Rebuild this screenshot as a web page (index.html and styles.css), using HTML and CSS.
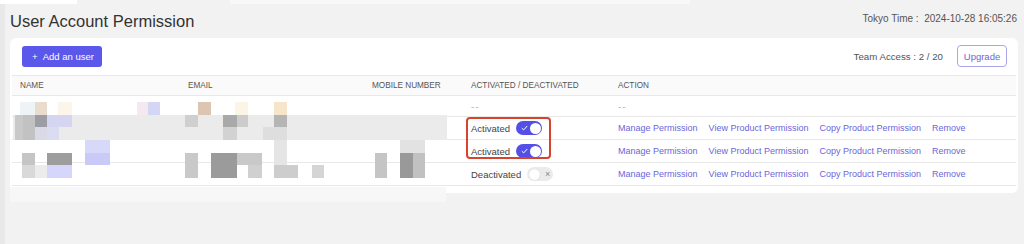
FILE: index.html
```html
<!DOCTYPE html>
<html lang="en">
<head>
    <meta charset="UTF-8">
    <meta name="viewport" content="width=device-width, initial-scale=1.0">
    <title>User Account Permission</title>
    <link rel="stylesheet" href="styles.css">
</head>
<body>
    <div class="page">
        <div class="top-strip">
            <span class="strip-a"></span>
            <span class="strip-b"></span>
        </div>

        <header class="page-head">
            <h1>User Account Permission</h1>
            <div class="clock">Tokyo Time :&nbsp; 2024-10-28 16:05:26</div>
        </header>

        <section class="card">
            <div class="toolbar">
                <button type="button" class="add-btn"><span class="plus">+</span> Add an user</button>
                <div class="team">
                    <span>Team Access : 2 / 20</span>
                    <button type="button" class="upgrade-btn">Upgrade</button>
                </div>
            </div>

            <div class="table">
                <div class="tr th">
                    <div class="td">NAME</div>
                    <div class="td">EMAIL</div>
                    <div class="td">MOBILE NUMBER</div>
                    <div class="td">ACTIVATED / DEACTIVATED</div>
                    <div class="td">ACTION</div>
                </div>

                <div class="tr short">
                    <div class="td"></div>
                    <div class="td"></div>
                    <div class="td"></div>
                    <div class="td muted">--</div>
                    <div class="td muted">--</div>
                </div>

                <div class="tr">
                    <div class="td"></div>
                    <div class="td"></div>
                    <div class="td"></div>
                    <div class="td status">
                        Activated
                        <span class="switch on">
                            <svg class="tick" width="7" height="6" viewBox="0 0 7 6"><path d="M0.8 3.2 L2.7 4.9 L6.2 1" fill="none" stroke="#fff" stroke-width="1"/></svg>
                            <span class="knob"></span>
                        </span>
                    </div>
                    <div class="td actions">
                        <a href="#">Manage Permission</a>
                        <a href="#">View Product Permission</a>
                        <a href="#">Copy Product Permission</a>
                        <a href="#">Remove</a>
                    </div>
                </div>

                <div class="tr">
                    <div class="td"></div>
                    <div class="td"></div>
                    <div class="td"></div>
                    <div class="td status">
                        Activated
                        <span class="switch on">
                            <svg class="tick" width="7" height="6" viewBox="0 0 7 6"><path d="M0.8 3.2 L2.7 4.9 L6.2 1" fill="none" stroke="#fff" stroke-width="1"/></svg>
                            <span class="knob"></span>
                        </span>
                    </div>
                    <div class="td actions">
                        <a href="#">Manage Permission</a>
                        <a href="#">View Product Permission</a>
                        <a href="#">Copy Product Permission</a>
                        <a href="#">Remove</a>
                    </div>
                </div>

                <div class="tr">
                    <div class="td"></div>
                    <div class="td"></div>
                    <div class="td"></div>
                    <div class="td status">
                        Deactivated
                        <span class="switch off">
                            <span class="knob"></span>
                            <span class="cross">×</span>
                        </span>
                    </div>
                    <div class="td actions">
                        <a href="#">Manage Permission</a>
                        <a href="#">View Product Permission</a>
                        <a href="#">Copy Product Permission</a>
                        <a href="#">Remove</a>
                    </div>
                </div>
            </div>
        </section>

        <!-- blurred personal data (mosaic) -->
        <div class="mosaic">
            <span style="left:13px;top:115px;width:434px;height:25px;background:#ebebeb"></span>
            <span style="left:10px;top:187px;width:436px;height:15px;background:#f7f7f7"></span>

            <span style="left:20px;top:102px;width:15px;height:13px;background:#eef3f7"></span>
            <span style="left:35px;top:102px;width:12px;height:13px;background:#e9dccd"></span>
            <span style="left:58px;top:102px;width:14px;height:13px;background:#fbf6e9"></span>
            <span style="left:137px;top:102px;width:11px;height:13px;background:#f4e9f0"></span>
            <span style="left:148px;top:102px;width:12px;height:13px;background:#d3d6f5"></span>
            <span style="left:198px;top:102px;width:13px;height:13px;background:#dcc6b3"></span>
            <span style="left:235px;top:102px;width:13px;height:13px;background:#fbf5e6"></span>
            <span style="left:274px;top:102px;width:13px;height:13px;background:#f7e5ca"></span>

            <span style="left:15px;top:115px;width:8px;height:25px;background:#c9c9c9"></span>
            <span style="left:23px;top:115px;width:12px;height:25px;background:#c2c2c2"></span>
            <span style="left:35px;top:115px;width:12px;height:12px;background:#9d9da5"></span>
            <span style="left:35px;top:127px;width:12px;height:13px;background:#d9d9e8"></span>
            <span style="left:47px;top:115px;width:25px;height:12px;background:#d5d5f1"></span>
            <span style="left:47px;top:127px;width:12px;height:13px;background:#dcdcf0"></span>
            <span style="left:185px;top:115px;width:13px;height:12px;background:#cfcfcf"></span>
            <span style="left:223px;top:115px;width:14px;height:12px;background:#a9a9a9"></span>
            <span style="left:223px;top:127px;width:14px;height:13px;background:#d2d2d2"></span>
            <span style="left:237px;top:115px;width:11px;height:12px;background:#cccccc"></span>
            <span style="left:274px;top:115px;width:13px;height:12px;background:#b5b5b5"></span>
            <span style="left:263px;top:127px;width:24px;height:13px;background:#dedede"></span>

            <span style="left:85px;top:140px;width:25px;height:13px;background:#d8d8f9"></span>
            <span style="left:85px;top:153px;width:25px;height:12px;background:#cacaf8"></span>
            <span style="left:22px;top:153px;width:13px;height:12px;background:#c5c5c5"></span>
            <span style="left:47px;top:153px;width:25px;height:12px;background:#9d9d9d"></span>
            <span style="left:185px;top:153px;width:13px;height:25px;background:#c9c9c9"></span>
            <span style="left:211px;top:153px;width:26px;height:25px;background:#9b9b9b"></span>
            <span style="left:237px;top:153px;width:25px;height:12px;background:#c9c9c9"></span>
            <span style="left:248px;top:165px;width:14px;height:13px;background:#d0d0d0"></span>
            <span style="left:274px;top:140px;width:13px;height:25px;background:#e5e5e5"></span>
            <span style="left:375px;top:153px;width:12px;height:25px;background:#c5c5c5"></span>
            <span style="left:400px;top:140px;width:25px;height:13px;background:#e2e2e2"></span>
            <span style="left:400px;top:153px;width:13px;height:25px;background:#999999"></span>
            <span style="left:413px;top:153px;width:12px;height:25px;background:#c1c1c1"></span>

            <span style="left:22px;top:165px;width:13px;height:13px;background:#d9d9d9"></span>
            <span style="left:35px;top:165px;width:12px;height:13px;background:#ececec"></span>
            <span style="left:47px;top:165px;width:25px;height:13px;background:#d6d6fc"></span>
            <span style="left:274px;top:165px;width:24px;height:13px;background:#cdcdcd"></span>
            <span style="left:312px;top:165px;width:12px;height:13px;background:#d5d5d5"></span>
        </div>

        <div class="mark"></div>
    </div>
</body>
</html>
```

FILE: styles.css
```css
body {
    margin: 0;
    font-family: "Liberation Sans", Arial, sans-serif;
    background-color: #f2f2f2;
    color: #333333;
}

.page {
    position: relative;
    height: 244px;
    border-left: 5px solid #e9e9e9;
    padding: 0 6px 0 5px;
}

.top-strip {
    display: flex;
    height: 4px;
    margin-left: -10px;
}

.strip-a {
    width: 77px;
    background: #ffffff;
}

.strip-b {
    width: 460px;
    margin-left: 153px;
    background: #f8f8f8;
}

.page-head {
    display: flex;
    justify-content: space-between;
    align-items: flex-start;
    padding: 7px 1px 7px 0;
}

.page-head h1 {
    margin: 0;
    font-size: 16.5px;
    line-height: 20px;
    font-weight: normal;
    color: #333333;
}

.clock {
    font-size: 10px;
    line-height: 12px;
    padding-top: 2px;
    color: #555555;
}

.card {
    background: #ffffff;
    border-radius: 6px;
    padding-bottom: 7px;
}

.toolbar {
    display: flex;
    justify-content: space-between;
    align-items: center;
    padding: 7px 11px 8px 12px;
}

.add-btn {
    height: 21px;
    padding: 0 8px 0 10px;
    background: #5b57ea;
    color: #ffffff;
    border: none;
    border-radius: 3px;
    font-family: inherit;
    font-size: 9.5px;
    cursor: pointer;
}

.add-btn .plus {
    margin-right: 3px;
}

.team {
    display: flex;
    align-items: center;
    gap: 14px;
    font-size: 9.7px;
    color: #555555;
}

.upgrade-btn {
    height: 22px;
    width: 50px;
    padding: 0;
    background: #ffffff;
    border: 1px solid #aaa4ea;
    border-radius: 4px;
    color: #6b66d9;
    font-family: inherit;
    font-size: 9.5px;
    cursor: pointer;
}

.table {
    margin: 0 2px;
    border-top: 1px solid #e8e8e8;
}

.tr {
    display: grid;
    grid-template-columns: 176px 184px 99px 147px 1fr;
    align-items: center;
    height: 23px;
    box-sizing: border-box;
    border-bottom: 1px solid #e8e8e8;
    font-size: 9.5px;
    color: #444444;
}

.tr .td:first-child {
    padding-left: 8px;
}

.th {
    height: 20px;
    background: #fafafa;
    font-size: 8.2px;
    color: #555555;
}

.short {
    height: 21px;
}

.muted {
    color: #bbbbbb;
    font-size: 10px;
    letter-spacing: 1px;
}

.status {
    display: flex;
    align-items: center;
    gap: 6px;
}

.switch {
    position: relative;
    display: inline-flex;
    align-items: center;
    width: 26px;
    height: 14px;
    border-radius: 7px;
    box-sizing: border-box;
}

.switch.on {
    background: #5450e6;
    justify-content: space-between;
    padding: 0 1.5px 0 5px;
}

.switch.off {
    background: #ebebeb;
    padding: 0 3px 0 1.5px;
    justify-content: space-between;
}

.knob {
    width: 11px;
    height: 11px;
    border-radius: 50%;
    background: #ffffff;
}

.switch.off .knob {
    box-shadow: 0 0 1px rgba(0, 0, 0, 0.2);
}

.cross {
    font-size: 9px;
    line-height: 9px;
    color: #888888;
}

.actions {
    display: flex;
    gap: 11px;
    font-size: 9px;
}

.actions a {
    color: #6b66d9;
    text-decoration: none;
}

.mosaic {
    position: absolute;
    left: -5px;
    top: 0;
}

.mosaic span {
    position: absolute;
    display: block;
}

.mark {
    position: absolute;
    left: 461px;
    top: 117px;
    width: 85px;
    height: 42px;
    box-sizing: border-box;
    border: 2px solid #d8432e;
    border-radius: 4px;
}
```
